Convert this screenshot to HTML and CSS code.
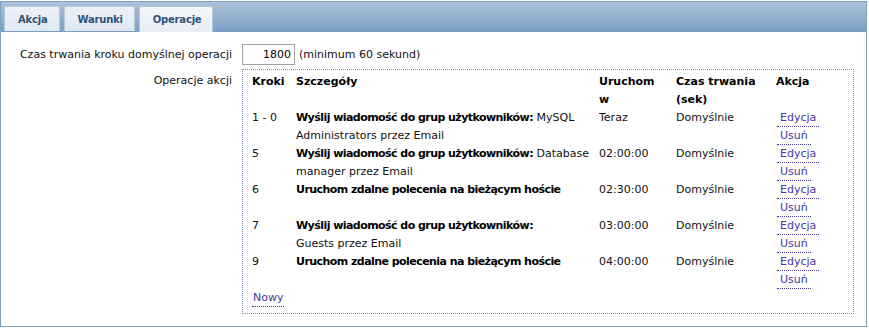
FILE: index.html
```html
<!DOCTYPE html>
<html lang="pl">
<head>
<meta charset="utf-8">
<title>Operacje</title>
<link rel="stylesheet" href="styles.css">
</head>
<body>
<div class="frame">
  <div class="tabbar">
    <div class="tab">Akcja</div>
    <div class="tab">Warunki</div>
    <div class="tab active">Operacje</div>
  </div>
  <div class="content">
    <div class="form">
      <div class="label lbl-mid">Czas trwania kroku domyślnej operacji</div>
      <div class="field">
        <span class="input">1800</span>
        <span class="hint">(minimum 60 sekund)</span>
      </div>
      <div class="label lbl-top">Operacje akcji</div>
      <div class="box">
        <table class="ops">
          <colgroup>
            <col class="c-step"><col class="c-det"><col class="c-start"><col class="c-dur"><col class="c-act">
          </colgroup>
          <thead>
            <tr>
              <th>Kroki</th>
              <th>Szczegóły</th>
              <th>Uruchom<br>w</th>
              <th>Czas trwania<br>(sek)</th>
              <th>Akcja</th>
            </tr>
          </thead>
          <tbody>
            <tr>
              <td>1 - 0</td>
              <td class="nw"><b>Wyślij wiadomość do grup użytkowników:</b> MySQL<br>Administrators przez Email</td>
              <td>Teraz</td>
              <td>Domyślnie</td>
              <td><a class="lnk">Edycja</a><a class="lnk">Usuń</a></td>
            </tr>
            <tr>
              <td>5</td>
              <td class="nw"><b>Wyślij wiadomość do grup użytkowników:</b> Database<br>manager przez Email</td>
              <td>02:00:00</td>
              <td>Domyślnie</td>
              <td><a class="lnk">Edycja</a><a class="lnk">Usuń</a></td>
            </tr>
            <tr>
              <td>6</td>
              <td class="nw"><b>Uruchom zdalne polecenia na bieżącym hoście</b></td>
              <td>02:30:00</td>
              <td>Domyślnie</td>
              <td><a class="lnk">Edycja</a><a class="lnk">Usuń</a></td>
            </tr>
            <tr>
              <td>7</td>
              <td class="nw"><b>Wyślij wiadomość do grup użytkowników:</b><br>Guests przez Email</td>
              <td>03:00:00</td>
              <td>Domyślnie</td>
              <td><a class="lnk">Edycja</a><a class="lnk">Usuń</a></td>
            </tr>
            <tr>
              <td>9</td>
              <td class="nw"><b>Uruchom zdalne polecenia na bieżącym hoście</b></td>
              <td>04:00:00</td>
              <td>Domyślnie</td>
              <td><a class="lnk">Edycja</a><a class="lnk">Usuń</a></td>
            </tr>
          </tbody>
        </table>
        <a class="lnk new">Nowy</a>
      </div>
    </div>
  </div>
</div>
</body>
</html>
```

FILE: styles.css
```css
html, body {
  margin: 0;
  padding: 0;
  background: #ffffff;
}
body {
  padding-top: 1px;
  font-family: Verdana, "DejaVu Sans", sans-serif;
  font-size: 11px;
  color: #111111;
}
.frame {
  width: 865px;
  height: 324px;
  border: 1px solid #7d9fc2;
  box-sizing: content-box;
}
.tabbar {
  height: 30px;
  display: flex;
  align-items: flex-end;
  gap: 4px;
  padding-left: 3px;
  background: linear-gradient(to bottom, #aec2da 0%, #95b1cf 50%, #7b9fc4 100%);
  border-bottom: 1px solid #7b9fc4;
  box-sizing: border-box;
}
.tab {
  height: 25px;
  line-height: 25px;
  padding: 0 11px 0 13px;
  font-size: 10px;
  letter-spacing: -0.2px;
  font-weight: bold;
  color: #2f5278;
  background: linear-gradient(to bottom, #eef2f7 0%, #dfe7f0 100%);
  border: 1px solid #b7c8dc;
  border-bottom: none;
  border-radius: 2px 2px 0 0;
  box-sizing: border-box;
}
.tab.active {
  background: linear-gradient(to bottom, #f3f6fa 0%, #e8eef5 100%);
  height: 26px;
  margin-bottom: -1px;
}
.content {
  padding: 12px 0 0 0;
}
.form {
  display: grid;
  grid-template-columns: 231px 612px;
  column-gap: 10px;
  row-gap: 4px;
}
.label {
  text-align: right;
  white-space: nowrap;
}
.lbl-mid {
  line-height: 20px;
  align-self: center;
}
.lbl-top {
  padding-top: 3px;
  line-height: 18px;
}
.field {
  display: flex;
  align-items: center;
  gap: 4px;
}
.input {
  display: block;
  width: 53px;
  height: 21px;
  line-height: 19px;
  box-sizing: border-box;
  border: 1px solid #a3a19a;
  background: #ffffff;
  text-align: right;
  padding-right: 3px;
  color: #000;
}
.box {
  border: 1px dotted #7f8fb5;
  padding: 3px 0 5px 9px;
  height: 245px;
  box-sizing: border-box;
}
.ops {
  border-collapse: collapse;
  table-layout: fixed;
  width: 600px;
}
.c-step { width: 44px; }
.c-det { width: 303px; }
.c-start { width: 77px; }
.c-dur { width: 100px; }
.c-act { width: 76px; }
.ops th, .ops td {
  padding: 0;
  text-align: left;
  vertical-align: top;
  line-height: 18px;
}
.ops th {
  font-weight: bold;
  color: #000;
}
.ops td b {
  letter-spacing: -0.55px;
  color: #000;
}
.nw {
  white-space: nowrap;
}
.lnk {
  display: block;
  width: fit-content;
  color: #45399f;
  line-height: 17px;
  border-bottom: 1px dotted #45399f;
  padding: 0 3px;
  margin-left: 1px;
  cursor: pointer;
}
.new {
  margin-left: 0;
  padding: 0 1px;
}
```
